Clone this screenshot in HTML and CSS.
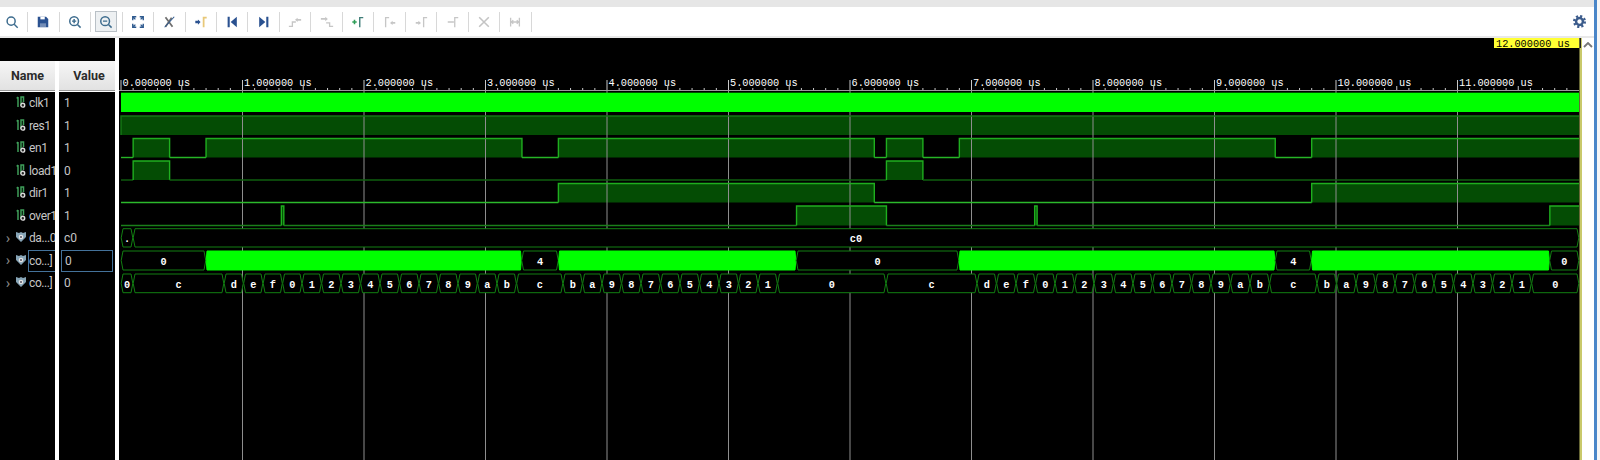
FILE: index.html
```html
<!DOCTYPE html>
<html lang="en">

<head>
  <meta charset="UTF-8">
  <title>Waveform</title>
  <link rel="stylesheet" href="styles.css">
</head>

<body>
  <svg class="defs" width="0" height="0">
    <symbol id="sig" viewBox="0 0 10 12">
      <path d="M2 1v10M0.800 2.500L2 1M5 10V1h2.500v5" fill="none" stroke="#3f9f5a" stroke-width="1.500" />
      <circle cx="6.800" cy="9.200" r="1.900" fill="#222" stroke="#dcdcdc" stroke-width="1.400" />
    </symbol>
    <symbol id="bus" viewBox="0 0 10 12">
      <path d="M0 1l3 1 2-1 2 1 3-1v5l-5 5-5-5z" fill="#86a4b6" />
      <circle cx="5" cy="6" r="2.300" fill="#e4e4e4" />
      <circle cx="5" cy="6" r="1" fill="#556" />
    </symbol>
  </svg>

  <div class="app">
    <div class="titlebar"></div>

    <div class="toolbar">
      <div class="tool">
        <svg viewBox="0 0 16 16"><circle cx="7" cy="7" r="4.600" class="ic-teal" /><path d="M10.500 10.500l4 4" class="ic-teal" /></svg>
      </div>
      <div class="tool">
        <svg viewBox="0 0 16 16"><path d="M2 2h9.500L14 4.500V14H2z" class="ic-fill" /><path d="M5 2h5v3H5z" fill="#fff" /><path d="M4.500 9.500h7V14h-7z" fill="#fff" opacity=".35" /></svg>
      </div>
      <div class="tool">
        <svg viewBox="0 0 16 16"><circle cx="7" cy="7" r="5" class="ic-teal" /><path d="M10.800 10.800l3.600 3.600M4.600 7h4.800M7 4.600v4.800" class="ic-teal" /></svg>
      </div>
      <div class="tool">
        <div class="hover-box">
          <svg viewBox="0 0 16 16"><circle cx="7" cy="7" r="5" class="ic-teal" /><path d="M10.800 10.800l3.600 3.600M4.600 7h4.800" class="ic-teal" /></svg>
        </div>
      </div>
      <div class="tool">
        <svg viewBox="0 0 16 16"><path d="M2 6V2h4M10 2h4v4M14 10v4h-4M6 14H2v-4M3 3l2 2M13 3l-2 2M13 13l-2-2M3 13l2-2" class="ic-navy" /></svg>
      </div>
      <div class="tool">
        <svg viewBox="0 0 16 16"><path d="M4 2.500l8 11M11 3L4 13.500" fill="none" stroke="#6f6f6f" stroke-width="2" /><path d="M14 2L3 14" fill="none" stroke="#2f5a8f" stroke-width="1.200" /></svg>
      </div>
      <div class="tool">
        <svg viewBox="0 0 16 16"><path d="M1.500 6.500h3V5l3 3-3 3V9.500h-3z" class="ic-fill" /><path d="M11 14V3h3.500" fill="none" stroke="#e8c878" stroke-width="2" /></svg>
      </div>
      <div class="tool">
        <svg viewBox="0 0 16 16"><path d="M3 2h2.400v12H3zM13.500 2v12L6.500 8z" class="ic-fill" /></svg>
      </div>
      <div class="tool">
        <svg viewBox="0 0 16 16"><path d="M2.500 2v12L9.500 8zM10.600 2H13v12h-2.400z" class="ic-fill" /></svg>
      </div>
      <div class="tool">
        <svg viewBox="0 0 16 16"><path d="M1 13h4V8h4" class="ic-off" /><path d="M15 4.500H11V3L8 5.500 11 8V6.500h4z" fill="#c6c6c6" /></svg>
      </div>
      <div class="tool">
        <svg viewBox="0 0 16 16"><path d="M15 13h-4V9H7" class="ic-off" /><path d="M1 3.500h5V2l3 2.500L6 7V5.500H1z" fill="#c6c6c6" /></svg>
      </div>
      <div class="tool">
        <svg viewBox="0 0 16 16"><path d="M1.500 8h5M4 5.500v5" fill="none" stroke="#2f9e58" stroke-width="1.800" /><path d="M10 14V3h4" fill="none" stroke="#3f7d78" stroke-width="1.600" /></svg>
      </div>
      <div class="tool">
        <svg viewBox="0 0 16 16"><path d="M3 14V3h4" class="ic-off" /><path d="M14 8h-3V6.500L8 9l3 2.500V10h3z" fill="#c6c6c6" /></svg>
      </div>
      <div class="tool">
        <svg viewBox="0 0 16 16"><path d="M11 14V3h4" class="ic-off" /><path d="M2 8h3V6.500L8 9l-3 2.500V10H2z" fill="#c6c6c6" /></svg>
      </div>
      <div class="tool">
        <svg viewBox="0 0 16 16"><path d="M10 14V3h4M2 8h7" class="ic-off" /></svg>
      </div>
      <div class="tool">
        <svg viewBox="0 0 16 16"><path d="M2.500 2.500l11 11M13.500 2.500l-11 11" fill="none" stroke="#c4c4c4" stroke-width="1.800" /></svg>
      </div>
      <div class="tool">
        <svg viewBox="0 0 16 16"><path d="M3 3v10M13 3v10M4 8h8M6 6L4 8l2 2M10 6l2 2-2 2" class="ic-off" /></svg>
      </div>
      <svg class="gear" viewBox="0 0 16 16">
        <circle cx="8" cy="8" r="4.200" fill="none" stroke="#3c5c8c" stroke-width="3" />
        <circle cx="8" cy="8" r="6.500" fill="none" stroke="#3c5c8c" stroke-width="3" stroke-dasharray="2.600 2.500" />
      </svg>
    </div>
    <div class="toolbar-rule"></div>

    <div class="main">
      <div class="signals">
        <div class="heads">
          <div class="head head-name">Name</div>
          <div class="head head-value">Value</div>
        </div>
        <div class="lists">
          <div class="names">
            <div class="name"><span class="chev"></span><svg class="sym"><use href="#sig" /></svg><span class="label">clk1</span></div>
            <div class="name"><span class="chev"></span><svg class="sym"><use href="#sig" /></svg><span class="label">res1</span></div>
            <div class="name"><span class="chev"></span><svg class="sym"><use href="#sig" /></svg><span class="label">en1</span></div>
            <div class="name"><span class="chev"></span><svg class="sym"><use href="#sig" /></svg><span class="label">load1</span></div>
            <div class="name"><span class="chev"></span><svg class="sym"><use href="#sig" /></svg><span class="label">dir1</span></div>
            <div class="name"><span class="chev"></span><svg class="sym"><use href="#sig" /></svg><span class="label">over1</span></div>
            <div class="name"><span class="chev">&#8250;</span><svg class="sym"><use href="#bus" /></svg><span class="label">da...0]</span></div>
            <div class="name"><span class="chev">&#8250;</span><svg class="sym"><use href="#bus" /></svg><span class="label selected">co...]</span></div>
            <div class="name"><span class="chev">&#8250;</span><svg class="sym"><use href="#bus" /></svg><span class="label">co...]</span></div>
          </div>
          <div class="gutter"></div>
          <div class="values">
            <div class="value">1</div>
            <div class="value">1</div>
            <div class="value">1</div>
            <div class="value">0</div>
            <div class="value">1</div>
            <div class="value">1</div>
            <div class="value">c0</div>
            <div class="value selected">0</div>
            <div class="value">0</div>
          </div>
        </div>
      </div>
      <div class="gutter"></div>
      <svg id="wave" class="wave" viewBox="119 38 1463 422"></svg>
      <div class="scrollbar">
        <svg class="scroll-up" viewBox="0 0 10 6"><path d="M1 5l4-4 4 4" fill="none" stroke="#777" stroke-width="1.800" /></svg>
      </div>
    </div>
  </div>
  <div class="edge"></div>
  <div class="edge-rest"></div>

  <script src="script.js"></script>
</body>

</html>
```

FILE: styles.css
```css
* {
  margin: 0;
  padding: 0;
  box-sizing: border-box;
}

html,
body {
  height: 100%;
  overflow: hidden;
}

body {
  display: flex;
  background: #fff;
  font-family: Roboto, "Liberation Sans", sans-serif;
}

.defs {
  position: absolute;
}

.app {
  width: 1594px;
  height: 460px;
  display: flex;
  flex-direction: column;
}

.edge {
  width: 2.5px;
  background: #4a86c8;
}

.edge-rest {
  flex: 1;
  background: #f6f6f6;
}

.titlebar {
  height: 7px;
  background: #e6e6e6;
}

/* toolbar */
.toolbar {
  height: 29px;
  display: flex;
  align-items: center;
  margin-left: -3.3px;
  padding-right: 8px;
  background: #fff;
}

.tool {
  width: 31.47px;
  height: 20px;
  display: flex;
  align-items: center;
  justify-content: center;
  border-right: 1px solid #d8d8d8;
}

.tool svg {
  width: 14px;
  height: 14px;
}

.hover-box {
  width: 22px;
  height: 21px;
  display: flex;
  align-items: center;
  justify-content: center;
  background: #edf0f2;
  border: 1px solid #b9c0c6;
}

.gear {
  width: 13px;
  height: 13px;
  margin-left: auto;
}

.ic-teal {
  fill: none;
  stroke: #3d6c8e;
  stroke-width: 1.7;
}

.ic-navy {
  fill: none;
  stroke: #2f5a8f;
  stroke-width: 1.6;
}

.ic-fill {
  fill: #2a5190;
}

.ic-off {
  fill: none;
  stroke: #c6c6c6;
  stroke-width: 1.5;
}

.toolbar-rule {
  height: 2px;
  background: #e8e8e8;
}

/* signal list */
.main {
  flex: 1;
  display: flex;
  min-height: 0;
}

.signals {
  width: 115px;
  padding-top: 23px;
  background: #000;
}

.heads {
  height: 31px;
  display: flex;
  background: #fff;
}

.head {
  display: flex;
  align-items: center;
  justify-content: center;
  height: 30px;
  font-size: 12.5px;
  font-weight: 700;
  color: #2b2b2b;
  background: linear-gradient(#f6f6f6, #e2e2e2);
  border-bottom: 1px solid #999;
}

.head-name {
  width: 55px;
  margin-right: 4px;
}

.head-value {
  width: 56px;
  padding-left: 4px;
}

.lists {
  display: flex;
  height: 368px;
}

.gutter {
  width: 4px;
  background: #fff;
}

.names,
.values {
  color: #c6c6c6;
  font-size: 12px;
}

.names {
  width: 55px;
  overflow: hidden;
}

.values {
  flex: 1;
}

.name,
.value {
  height: 22.5px;
  display: flex;
  align-items: center;
}

.chev {
  width: 18px;
  text-align: center;
  font-size: 15px;
  line-height: 15px;
  color: #8a8a8a;
}

.sym {
  width: 10px;
  height: 12px;
  flex: none;
  margin-top: -2px;
}

.label {
  flex: none;
  width: 27px;
  height: 22px;
  display: flex;
  align-items: center;
  margin-left: 2px;
  border: 1px solid transparent;
  border-right: 0;
  letter-spacing: -0.4px;
  white-space: nowrap;
}

.value {
  padding-left: 5px;
}

.value.selected {
  margin-left: 2px;
  margin-right: 2px;
  padding-left: 3px;
  height: 22px;
  border: 1.5px solid #44729a;
}

.label.selected {
  border-color: #44729a;
}

/* waveform */
.wave {
  width: 1463px;
  height: 422px;
  flex: none;
  background: #000;
}

.ruler-text,
.bus-text {
  font-family: "Liberation Mono", monospace;
  font-size: 10.25px;
  fill: #fff;
}

.bus-text {
  font-weight: 700;
  text-anchor: middle;
}

.cursor-text {
  fill: #000;
}

.scrollbar {
  flex: 1;
  display: flex;
  justify-content: center;
  padding-top: 4px;
  background: #fff;
}

.scroll-up {
  width: 10px;
  height: 6px;
}
```

FILE: script.js
```js
const svg = document.getElementById('wave');
const NS = 'http://www.w3.org/2000/svg';
const X0 = 121;
const END = 1579;
// 0.1us on screen
const UNIT = 12.15;
const x = (t) => X0 + t * UNIT;

function add(tag, attrs, text) {
  const el = document.createElementNS(NS, tag);
  for (const k in attrs) el.setAttribute(k, attrs[k]);
  if (text !== undefined) el.textContent = text;
  svg.appendChild(el);
  return el;
}

function line(x1, y1, x2, y2, stroke, width) {
  add('line', { x1, y1, x2, y2, stroke, 'stroke-width': width || 1 });
}

// ruler
for (let i = 0; i <= 119; i++) {
  const h = i % 10 === 0 ? 11 : i % 5 === 0 ? 5 : 3;
  const tx = x(i);
  line(tx, 91, tx, 91 - h, '#c8c8c8');
}
line(119, 90.5, END, 90.5, '#9a9a9a');
for (let i = 0; i < 12; i++) {
  add('text', { x: x(i * 10) + 1.5, y: 86, class: 'ruler-text' }, i + '.000000 us');
}

// cursor flag and end line
add('rect', { x: 1494, y: 38, width: 85, height: 10, fill: '#ffff33' });
add('text', { x: 1496, y: 47, class: 'ruler-text cursor-text' }, '12.000000 us');
add('rect', { x: 1579.5, y: 38, width: 2.5, height: 422, fill: '#c9c96a' });
add('rect', { x: 1580, y: 38, width: 1, height: 10, fill: '#222' });

// single bit rows: top, bottom, high intervals in 0.1us, colour of the low line
const bits = [
  { top: 116, bot: 135, high: [[0, 120]], low: '#1a8a1a', flat: true },
  { top: 138.5, bot: 157.5, high: [[1, 4], [7, 33], [36, 62], [63, 66], [69, 95], [98, 120]], low: '#26b526' },
  { top: 161, bot: 180, high: [[1, 4], [63, 66]], low: '#0f5f0f' },
  { top: 183.5, bot: 202.5, high: [[36, 62], [98, 120]], low: '#2cb92c' },
  { top: 206, bot: 225.5, high: [[13.2, 13.4], [55.6, 63], [75.2, 75.4], [117.6, 120]], low: '#1a7f1a' }
];

for (const b of bits) {
  for (const [a, c] of b.high) {
    add('rect', { x: x(a), y: b.top, width: (c - a) * UNIT, height: b.bot - b.top, fill: '#044c04' });
  }
}

// grid over the dark fill
for (let i = 1; i < 12; i++) {
  line(x(i * 10), 91, x(i * 10), 460, '#8e8e8e');
}

for (const b of bits) {
  let pos = 0;
  for (const [a, c] of b.high) {
    if (a > pos) line(x(pos), b.bot, x(a), b.bot, b.low, 1.4);
    const right = c >= 120 ? '' : ' V' + b.bot;
    add('path', {
      d: 'M' + x(a) + ' ' + b.bot + ' V' + b.top + ' H' + x(c) + right,
      fill: 'none',
      stroke: b.flat ? '#147a14' : '#1fae1f',
      'stroke-width': 1.4
    });
    pos = c;
  }
  if (pos < 120) line(x(pos), b.bot, END, b.bot, b.low, 1.4);
}

// clk is too fast to draw edges
add('rect', { x: X0, y: 92.7, width: END - X0, height: 19.3, fill: '#00ff00' });

function hex(x1, x2, top, bot, label, bright) {
  const mid = (top + bot) / 2;
  const n = bright ? 0.8 : 1.8;
  const a = x1 + 0.2;
  const z = x2 - 0.2;
  const pts = [
    [a, mid], [a + n, top], [z - n, top], [z, mid], [z - n, bot], [a + n, bot]
  ].map((p) => p.join(',')).join(' ');
  add('polygon', {
    points: pts,
    fill: bright ? '#00ff00' : '#000',
    stroke: bright ? '#00ff00' : '#127f12',
    'stroke-width': 1
  });
  if (label) {
    add('text', { x: (x1 + x2) / 2, y: mid + 4.5, class: 'bus-text' }, label);
  }
}

function busRow(top, bot, parts) {
  for (const [a, c, label, bright] of parts) hex(a, c, top, bot, label, bright);
}

busRow(228.7, 247, [[121, 133, '.'], [133, END, 'c0']]);

busRow(251, 270, [
  [121, 206, '0'],
  [206, 521.5, '', true],
  [521.5, 558.5, '4'],
  [558.5, 796, '', true],
  [796, 959, '0'],
  [959, 1275, '', true],
  [1275, 1311.5, '4'],
  [1311.5, 1549.5, '', true],
  [1549.5, END, '0']
]);

// counter row: long values at fixed places, the run of short ones between them
const count = [[121, 133, '0'], [133, 224, 'c']];
function run(start, values) {
  values.split('').forEach((v, i) => {
    count.push([start + i * 19.5, start + (i + 1) * 19.5, v]);
  });
}
run(224, 'def0123456789ab');
count.push([516.5, 563, 'c']);
run(563, 'ba987654321');
count.push([777.5, 886, '0'], [886, 977, 'c']);
run(977, 'def0123456789ab');
count.push([1269.5, 1317, 'c']);
run(1317, 'ba987654321');
count.push([1531.5, END, '0']);
busRow(274, 292.7, count);
```
